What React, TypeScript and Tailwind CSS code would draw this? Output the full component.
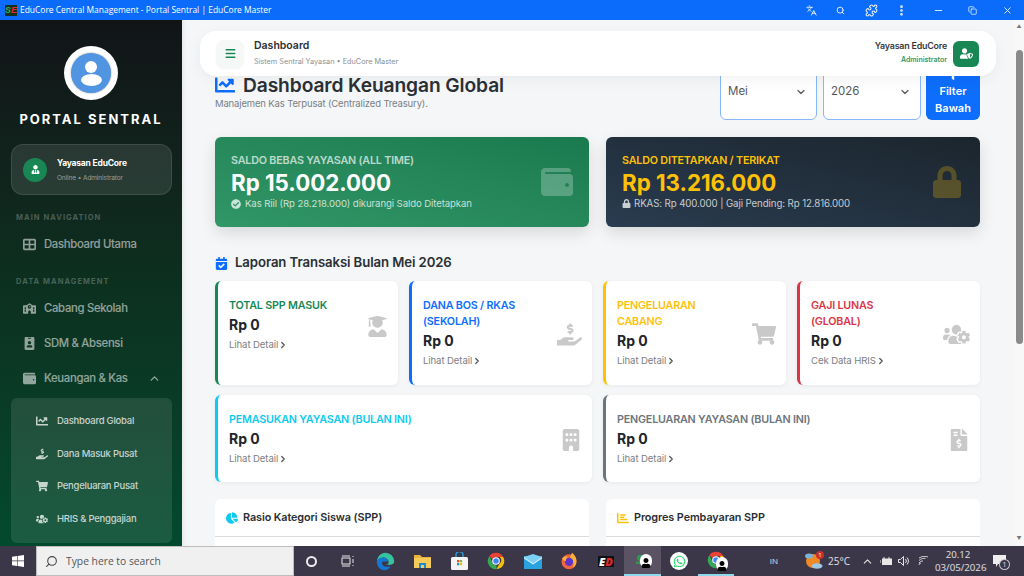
import React from "react";
import { Languages, Search, Puzzle, MoreVertical, Minus, Copy, X, ChevronDown, ChevronUp, ChevronRight, Menu } from "lucide-react";
import { FaChartLine, FaWallet, FaLock, FaCheckCircle, FaUserGraduate, FaHandHoldingUsd, FaShoppingCart, FaUsersCog, FaFileInvoiceDollar, FaCalendarCheck, FaChartPie, FaIdBadge, FaUserTie, FaUserShield, FaFilter, FaWhatsapp, FaUser } from "react-icons/fa";
import { FaTableCellsLarge, FaBuilding, FaSchool, FaChartBar } from "react-icons/fa6";

const Nav = ({ icon, label, chevron, cls }: { icon: React.ReactNode; label: string; chevron?: boolean; cls?: string }) => (
  <div className={`flex items-center h-[35px] pl-[23px] pr-[21px] text-[11.3px] font-medium tracking-[-0.3px] text-white/55 ${cls ?? ""}`}>
    <span className="w-[21px] flex text-[13px]">{icon}</span>
    <span className="flex-1">{label}</span>
    {chevron && <ChevronUp size={13} strokeWidth={2.5} />}
  </div>
);

const Sub = ({ icon, label }: { icon: React.ReactNode; label: string }) => (
  <div className="flex items-center h-[32.8px] pl-[25px] text-[9.5px] font-medium tracking-[-0.25px] text-white/75">
    <span className="w-[21px] flex text-[12px]">{icon}</span>
    <span>{label}</span>
  </div>
);

const Stat = ({ title, color, border, icon, link = "Lihat Detail", h }: { title: React.ReactNode; color: string; border: string; icon: React.ReactNode; link?: string; h: string }) => (
  <div className={`bg-white rounded-md border-l-[3px] shadow-[0_1px_4px_rgba(0,0,0,0.06)] pl-[11px] pr-[10px] pt-[17px] ${border} ${h}`}>
    <div className="flex items-center justify-between pb-[4px]">
      <div>
        <div className={`text-[10.75px] leading-[16px] font-semibold tracking-[-0.2px] ${color}`}>{title}</div>
        <div className="text-[14px] leading-[20px] font-bold text-[#212529] mt-[1px]">Rp 0</div>
        <div className="flex items-center text-[9.6px] leading-[19px] text-[#7a7f85] tracking-[-0.1px]">{link}<ChevronRight size={10} strokeWidth={3} className="text-[#555]" /></div>
      </div>
      <div className="text-[#c9c9c9]">{icon}</div>
    </div>
  </div>
);

const Panel = ({ icon, title }: { icon: React.ReactNode; title: string }) => (
  <div className="bg-white rounded-t-md h-[60px]">
    <div className="h-[38px] border-b border-[#dcdcdc] flex items-center gap-[5px] pl-[11px] text-[10.85px] font-semibold text-[#2b3035] tracking-[-0.1px]">{icon}{title}</div>
  </div>
);

const Overlay = () => (
  <span className="absolute -right-[3px] -bottom-[2px] w-[12px] h-[14px] rounded-full bg-white flex items-end justify-center">
    <FaUser className="text-black text-[10px]" />
  </span>
);

const Slot = ({ children, cls, w = "w-[36.7px]" }: { children: React.ReactNode; cls?: string; w?: string }) => (
  <div className={`${w} h-full flex items-center justify-center shrink-0 ${cls ?? ""}`}>{children}</div>
);

const ChromeIcon = () => (
  <svg width="18" height="18" viewBox="0 0 24 24">
    <path d="M12 1a11 11 0 0 1 9.6 5.5H12a5.5 5.5 0 0 0-5 3.2L3.3 5.3A11 11 0 0 1 12 1z" fill="#ea4335" />
    <path d="M21.6 6.5A11 11 0 0 1 12.5 23l4.3-7.6a5.5 5.5 0 0 0 0-8.9z" fill="#fbbc05" />
    <path d="M12.5 23A11 11 0 0 1 3.3 5.3L7.6 15a5.5 5.5 0 0 0 5.2 2.5z" fill="#34a853" />
    <circle cx="12" cy="12" r="4.4" fill="#4285f4" stroke="#fff" strokeWidth="1.4" />
  </svg>
);

export default function App() {
  return (
    <div className="w-[1024px] h-[576px] overflow-hidden flex flex-col font-['Inter',sans-serif] bg-[#f4f6f7]">
      {/* Window title bar */}
      <div className="h-[20px] shrink-0 bg-[#0b6cfb] flex items-center text-white font-['Open_Sans',sans-serif]">
        <div className="ml-[5px] w-[12px] h-[11px] bg-[#16301f] flex items-center justify-center text-[9px] leading-none font-black italic font-['Liberation_Sans',sans-serif]"><span className="text-[#27b05a]">S</span><span className="text-[#e0292f]">E</span></div>
        <span className="ml-[3px] text-[8.45px] whitespace-nowrap">EduCore Central Management - Portal Sentral | EduCore Master</span>
        <div className="ml-auto flex items-center h-full text-white/90">
          <Languages size={11} className="mr-[19px]" />
          <Search size={9} className="mr-[20px]" strokeWidth={2.5} />
          <Puzzle size={13} className="mr-[17px]" />
          <MoreVertical size={13} strokeWidth={3} className="mr-[25px]" />
          <Minus size={11} className="mr-[24px]" />
          <Copy size={9} className="mr-[25px]" />
          <X size={11} className="mr-[11px]" />
        </div>
      </div>

      <div className="flex-1 flex min-h-0">
        {/* Sidebar */}
        <aside className="w-[182px] shrink-0 bg-gradient-to-b from-[#111417] via-[#0c3020] to-[#024a2e] flex flex-col overflow-hidden">
          <div className="self-center mt-[26px] w-[54px] h-[54px] rounded-full bg-white flex items-center justify-center">
            <div className="w-[40px] h-[40px] rounded-full bg-[#5094e2] flex flex-col items-center justify-center gap-[1px] shadow-[0_0_2px_rgba(0,0,0,0.4)]">
              <div className="w-[12px] h-[12px] rounded-full bg-white" />
              <div className="w-[21px] h-[12px] rounded-[50%] bg-white" />
            </div>
          </div>
          <div className="mt-[10px] text-center text-white text-[13px] leading-[18px] font-bold tracking-[2px] whitespace-nowrap">PORTAL SENTRAL</div>
          <div className="ml-[11px] mr-[10px] mt-[16px] h-[51px] rounded-xl bg-white/10 border border-white/10 flex items-center pl-[11px] gap-[10px]">
            <div className="w-[24px] h-[24px] rounded-full bg-[#198754] flex items-center justify-center text-white text-[9px]"><FaUserTie /></div>
            <div>
              <div className="text-[8.5px] leading-[12px] font-bold text-white tracking-[-0.2px]">Yayasan EduCore</div>
              <div className="text-[6.5px] leading-[10px] mt-[4px] text-white/50 tracking-[-0.1px]">Online • Administrator</div>
            </div>
          </div>
          <div className="pl-[16px] mt-[17.5px] text-[7.5px] leading-[10px] font-bold tracking-[1.05px] text-white/25">MAIN NAVIGATION</div>
          <Nav cls="mt-[4px]" icon={<FaTableCellsLarge />} label="Dashboard Utama" />
          <div className="pl-[16px] mt-[15.5px] text-[7.5px] leading-[10px] font-bold tracking-[1.05px] text-white/25">DATA MANAGEMENT</div>
          <Nav cls="mt-[4px]" icon={<FaSchool />} label="Cabang Sekolah" />
          <Nav icon={<FaIdBadge />} label="SDM & Absensi" />
          <Nav icon={<FaWallet />} label="Keuangan & Kas" chevron />
          <div className="ml-[11px] mr-[10px] mt-[1.5px] rounded-md bg-white/10 py-[7px]">
            <Sub icon={<FaChartLine />} label="Dashboard Global" />
            <Sub icon={<FaHandHoldingUsd />} label="Dana Masuk Pusat" />
            <Sub icon={<FaShoppingCart />} label="Pengeluaran Pusat" />
            <Sub icon={<FaUsersCog />} label="HRIS & Penggajian" />
          </div>
        </aside>

        {/* Main */}
        <main className="relative flex-1 min-w-0 overflow-hidden shadow-[inset_4px_0_4px_-3px_rgba(0,0,0,0.08)]">
          {/* Floating header */}
          <div className="absolute left-[18px] right-[18px] top-[11px] h-[45px] z-10 bg-white rounded-2xl shadow-[0_4px_14px_rgba(0,0,0,0.05)] flex items-center pl-[16px] pr-[17px]">
            <div className="w-[28px] h-[28px] rounded-lg bg-[#f6f8f8] shadow-[0_1px_2px_rgba(0,0,0,0.05)] flex items-center justify-center text-[#198754]">
              <Menu size={13} strokeWidth={2.5} />
            </div>
            <div className="ml-[10px] -mt-[2px]">
              <div className="text-[10.5px] leading-[14px] font-semibold text-[#2b3035]">Dashboard</div>
              <div className="text-[7.3px] leading-[10px] mt-[4px] text-[#8a9096]">Sistem Sentral Yayasan • EduCore Master</div>
            </div>
            <div className="ml-auto text-right mr-[6px] -mt-[2px]">
              <div className="text-[8.9px] leading-[12px] font-semibold text-[#343a40] tracking-[-0.2px]">Yayasan EduCore</div>
              <div className="text-[7px] leading-[10px] mt-[3px] font-semibold text-[#2e9a68]">Administrator</div>
            </div>
            <div className="w-[26px] h-[26px] rounded-md bg-[#198754] flex items-center justify-center text-white text-[13px]"><FaUserShield /></div>
          </div>

          {/* Scrollable content */}
          <div className="pl-[33px] pr-[34px] pt-[42px]">
            <div className="flex h-[58px] justify-between">
              <div className="pt-[9px]">
                <div className="flex items-center gap-[8px] text-[#2b3035] h-[28px]">
                  <FaChartLine className="text-[#0d6efd] text-[20px]" />
                  <span className="text-[19.2px] font-semibold tracking-[-0.1px] whitespace-nowrap">Dashboard Keuangan Global</span>
                </div>
                <div className="text-[9.5px] leading-[12px] text-[#7a7f85] tracking-[-0.15px] -mt-[1px]">Manajemen Kas Terpusat (Centralized Treasury).</div>
              </div>
              <div className="flex gap-[6px]">
                <div className="w-[97px] h-full bg-white border border-[#86b7fe] rounded-md flex items-center justify-between pl-[7px] pr-[9px] pt-[2px] text-[11.5px] text-[#55595e]">Mei<ChevronDown size={12} strokeWidth={2.5} /></div>
                <div className="w-[98px] h-full bg-white border border-[#86b7fe] rounded-md flex items-center justify-between pl-[7px] pr-[9px] pt-[2px] text-[11.5px] text-[#55595e]">2026<ChevronDown size={12} strokeWidth={2.5} /></div>
                <div className="w-[54px] -ml-[1px] h-full bg-[#0d6efd] rounded-md text-white text-[11px] leading-[17px] font-semibold flex flex-col items-center justify-end pb-[3px]">
                  <FaFilter className="text-[10px] mb-[3px]" />
                  <span>Filter</span>
                  <span>Bawah</span>
                </div>
              </div>
            </div>

            <div className="mt-[17px] grid grid-cols-2 gap-[17px]">
              <div className="h-[90px] rounded-md bg-gradient-to-tr from-[#319767] to-[#1a7a4f] shadow-[0_6px_16px_rgba(0,0,0,0.12)] pl-[16px] pr-[16px] flex items-center justify-between text-white">
                <div>
                  <div className="text-[10.75px] leading-[14px] font-semibold text-white/70 tracking-[-0.2px]">SALDO BEBAS YAYASAN (ALL TIME)</div>
                  <div className="text-[22.3px] leading-[29px] font-bold">Rp 15.002.000</div>
                  <div className="flex items-center gap-[4px] text-[9.6px] leading-[13px] text-white/75 tracking-[-0.1px]"><FaCheckCircle className="text-[10px]" />Kas Riil (Rp 28.218.000) dikurangi Saldo Ditetapkan</div>
                </div>
                <FaWallet className="text-white/25 text-[32px]" />
              </div>
              <div className="h-[90px] rounded-md bg-gradient-to-tr from-[#2a3c50] to-[#1b252d] shadow-[0_6px_16px_rgba(0,0,0,0.12)] pl-[16px] pr-[17px] flex items-center justify-between">
                <div>
                  <div className="text-[10.75px] leading-[14px] font-semibold text-[#ffc107] tracking-[-0.2px]">SALDO DITETAPKAN / TERIKAT</div>
                  <div className="text-[22.3px] leading-[29px] font-bold text-[#ffc107]">Rp 13.216.000</div>
                  <div className="flex items-center gap-[3px] text-[9.7px] leading-[13px] text-white/75 tracking-[-0.1px]"><FaLock className="text-[9px]" />RKAS: Rp 400.000 | Gaji Pending: Rp 12.816.000</div>
                </div>
                <FaLock className="text-[#ffc107]/25 text-[32px]" />
              </div>
            </div>

            <div className="mt-[27px] flex items-center gap-[7px] h-[18px] text-[13.2px] font-semibold text-[#2b3035] tracking-[-0.1px]">
              <FaCalendarCheck className="text-[#0d6efd] text-[13px]" />Laporan Transaksi Bulan Mei 2026
            </div>

            <div className="mt-[9px] grid grid-cols-4 gap-x-[11px] gap-y-[10px]">
              <Stat h="h-[104px]" title="TOTAL SPP MASUK" color="text-[#198754]" border="border-[#198754]" icon={<FaUserGraduate className="text-[21px]" />} />
              <Stat h="h-[104px]" title={<>DANA BOS / RKAS<br />(SEKOLAH)</>} color="text-[#0d6efd]" border="border-[#0d6efd]" icon={<FaHandHoldingUsd className="text-[25px]" />} />
              <Stat h="h-[104px]" title={<>PENGELUARAN<br />CABANG</>} color="text-[#ffc107]" border="border-[#ffc107]" icon={<FaShoppingCart className="text-[24px]" />} />
              <Stat h="h-[104px]" link="Cek Data HRIS" title={<>GAJI LUNAS<br />(GLOBAL)</>} color="text-[#dc3545]" border="border-[#dc3545]" icon={<FaUsersCog className="text-[27px]" />} />
              <div className="col-span-2">
                <Stat h="h-[87px]" title="PEMASUKAN YAYASAN (BULAN INI)" color="text-[#0dcaf0]" border="border-[#0dcaf0]" icon={<FaBuilding className="text-[22px]" />} />
              </div>
              <div className="col-span-2">
                <Stat h="h-[87px]" title="PENGELUARAN YAYASAN (BULAN INI)" color="text-[#6c757d]" border="border-[#6c757d]" icon={<FaFileInvoiceDollar className="text-[22px]" />} />
              </div>
            </div>

            <div className="mt-[17px] grid grid-cols-2 gap-[17px]">
              <Panel icon={<FaChartPie className="text-[#0dcaf0] text-[12px]" />} title="Rasio Kategori Siswa (SPP)" />
              <Panel icon={<FaChartBar className="text-[#ffc107] text-[12px]" />} title="Progres Pembayaran SPP" />
            </div>
          </div>
        </main>

        {/* Scrollbar */}
        <div className="w-[10px] shrink-0 bg-[#f8f8f8] flex flex-col items-center">
          <div className="mt-[3px] text-[#777] text-[5px] leading-[6px]">▲</div>
          <div className="mt-[21px] w-[7px] h-[294px] rounded-full bg-[#8a8a8a]" />
          <div className="mt-auto mb-[5px] text-[#777] text-[5px] leading-[6px]">▼</div>
        </div>
      </div>

      {/* Taskbar */}
      <div className="h-[30px] shrink-0 bg-[#3c3649] flex items-center text-white font-['Open_Sans',sans-serif]">
        <Slot w="w-[36px]">
          <svg width="12" height="12" viewBox="0 0 12 12" fill="#fff"><path d="M0 1.700 5 1v4.600H0zM5.600.9 12 0v5.600H5.600zM0 6.200h5v4.700L0 10.200zM5.600 6.200H12V12l-6.400-.9z" /></svg>
        </Slot>
        <div className="w-[258px] h-full bg-[#f0f0f0] border border-[#bdbdbd] flex items-center pl-[8px] text-[#444] shrink-0">
          <Search size={13} className="-scale-x-100 mr-[8px]" />
          <span className="text-[10.3px] text-[#555] pt-[1px]">Type here to search</span>
        </div>
        <Slot w="w-[35px]"><div className="w-[11px] h-[11px] rounded-full border-2 border-white/90" /></Slot>
        <Slot w="w-[36px]">
          <svg width="13" height="12" viewBox="0 0 13 12" fill="none" stroke="#e8e8e8" strokeWidth="1"><rect x="1" y="3" width="8" height="6" /><path d="M1 1h8M1 11h8M12 1v1M12 4v4M12 10v1" /></svg>
        </Slot>
        <Slot cls="ml-[2.5px]">
          <svg width="19" height="19" viewBox="0 0 24 24">
            <path d="M12 1a11 11 0 0 1 11 11c0 3-3 4-5 4h-6c2 0 4-1 4-3 0-3-3-6-7-6-4 0-7 3-8 5C2 6 6 1 12 1z" fill="#35c4a0" />
            <path d="M1 12c1-3 4-5 8-5 3 0 6 2 6 5H9c-2 0-2 3 0 5 2 2 7 2 10 1-2 3-5 5-8 5C5 23 1 18 1 12z" fill="#1477d4" />
          </svg>
        </Slot>
        <Slot>
          <svg width="17" height="15" viewBox="0 0 17 15"><path d="M0 1h6l2 2h9v11H0z" fill="#e9b53b" /><rect y="4" width="17" height="10" fill="#f5cc5a" /><path d="M5 14V9h7v5h-2v-3H7v3z" fill="#1d8ad0" /></svg>
        </Slot>
        <Slot>
          <svg width="17" height="18" viewBox="0 0 17 18"><path d="M5 5V3a3 3 0 0 1 7 0v2" fill="none" stroke="#29a3dc" strokeWidth="1.400" /><rect y="5" width="17" height="13" rx="1.500" fill="#f4f4f4" /><rect x="6" y="8" width="2.300" height="2.300" fill="#e7502d" /><rect x="8.800" y="8" width="2.300" height="2.300" fill="#7db93a" /><rect x="6" y="11" width="2.300" height="2.300" fill="#1e9ad6" /><rect x="8.800" y="11" width="2.300" height="2.300" fill="#f5b915" /></svg>
        </Slot>
        <Slot><ChromeIcon /></Slot>
        <Slot>
          <svg width="18" height="15" viewBox="0 0 18 15"><rect y="2" width="18" height="13" fill="#29a3e0" /><path d="M0 3 9 0l9 3-9 6z" fill="#7dd0f5" /><path d="M0 3l9 6 9-6v1.500L9 10.500 0 4.500z" fill="#fff" opacity=".8" /></svg>
        </Slot>
        <Slot>
          <svg width="18" height="18" viewBox="0 0 24 24"><circle cx="12" cy="13" r="10" fill="#f0663a" /><path d="M16 1c3 2 6 6 6 11 0 4-2 7-5 9 2-4 1-10-4-13 1-3 2-5 3-7z" fill="#fbb03b" /><circle cx="12" cy="13" r="5.500" fill="#5b35c9" /><path d="M3 8c2-2 6-3 8-1-2 0-3 2-3 4s-4 1-5-3z" fill="#fbb03b" /></svg>
        </Slot>
        <Slot>
          <div className="text-[11px] leading-none font-black italic bg-[#111] px-[1px]"><span className="text-white">E</span><span className="text-[#e0292f]">D</span></div>
        </Slot>
        <Slot cls="bg-white/15 border-b-2 border-[#8fd8ee]">
          <div className="relative text-[12px] leading-none font-black italic"><span className="text-[#22a350]">S</span><span className="text-[#e0292f]">E</span><Overlay /></div>
        </Slot>
        <Slot><div className="w-[18px] h-[18px] rounded-full bg-white flex items-center justify-center text-[#25d366] text-[13px]"><FaWhatsapp /></div></Slot>
        <Slot cls="border-b-2 border-[#8fd8ee]"><div className="relative flex"><ChromeIcon /><Overlay /></div></Slot>
        <div className="ml-auto flex items-center h-full text-white/85">
          <span className="text-[8px] mr-[26px]">IN</span>
          <div className="relative mr-[5px]">
            <svg width="19" height="18" viewBox="0 0 19 18"><circle cx="9" cy="9" r="7" fill="#f08a24" /><ellipse cx="5" cy="4" rx="4" ry="2.500" fill="#7eb3d9" /><ellipse cx="13" cy="14" rx="5.500" ry="2.800" fill="#9fc7e6" /></svg>
            <span className="absolute -top-[1px] -right-[1px] w-[8px] h-[8px] rounded-full bg-[#c9302c] text-[6px] leading-[8px] text-center text-white">1</span>
          </div>
          <span className="text-[10px] mr-[11px]">25°C</span>
          <ChevronUp size={13} className="mr-[6px]" />
          <svg width="12" height="9" viewBox="0 0 12 9" fill="none" stroke="#e8e8e8" className="mr-[6px]"><rect x="2.500" y="2" width="9" height="5.500" fill="#e8e8e8" /><path d="M0 3v3M4 0v2M9 0v2" /></svg>
          <svg width="12" height="10" viewBox="0 0 12 10" fill="none" stroke="#e8e8e8" className="mr-[8px]"><path d="M0.500 3.500h2l3-3v9l-3-3h-2zM7.500 3a3 3 0 0 1 0 4M9 1.500a5 5 0 0 1 0 7" /></svg>
          <svg width="11" height="10" viewBox="0 0 11 10" fill="none" stroke="#cfcfcf" className="mr-[6px]"><path d="M1 9a2 2 0 0 1 2-2M1 7a4 4 0 0 1 4-2M1 4.500C3 2.500 6 2 7.500 2.500M1 2c3-2 7-2 9-1" /></svg>
          <div className="text-center text-[9.7px] leading-[13.500px] w-[46px] whitespace-nowrap"><div>20.12</div><div>03/05/2026</div></div>
          <div className="relative ml-[12px] mr-[18px]">
            <svg width="13" height="12" viewBox="0 0 13 12" fill="#eee"><path d="M0 0h13v9H5l-2 3V9H0z" /></svg>
            <span className="absolute -right-[4px] -bottom-[3px] w-[11px] h-[11px] rounded-full bg-[#3c3649] border border-white/70 text-[7px] leading-[9px] text-center">1</span>
          </div>
        </div>
      </div>
    </div>
  );
}
